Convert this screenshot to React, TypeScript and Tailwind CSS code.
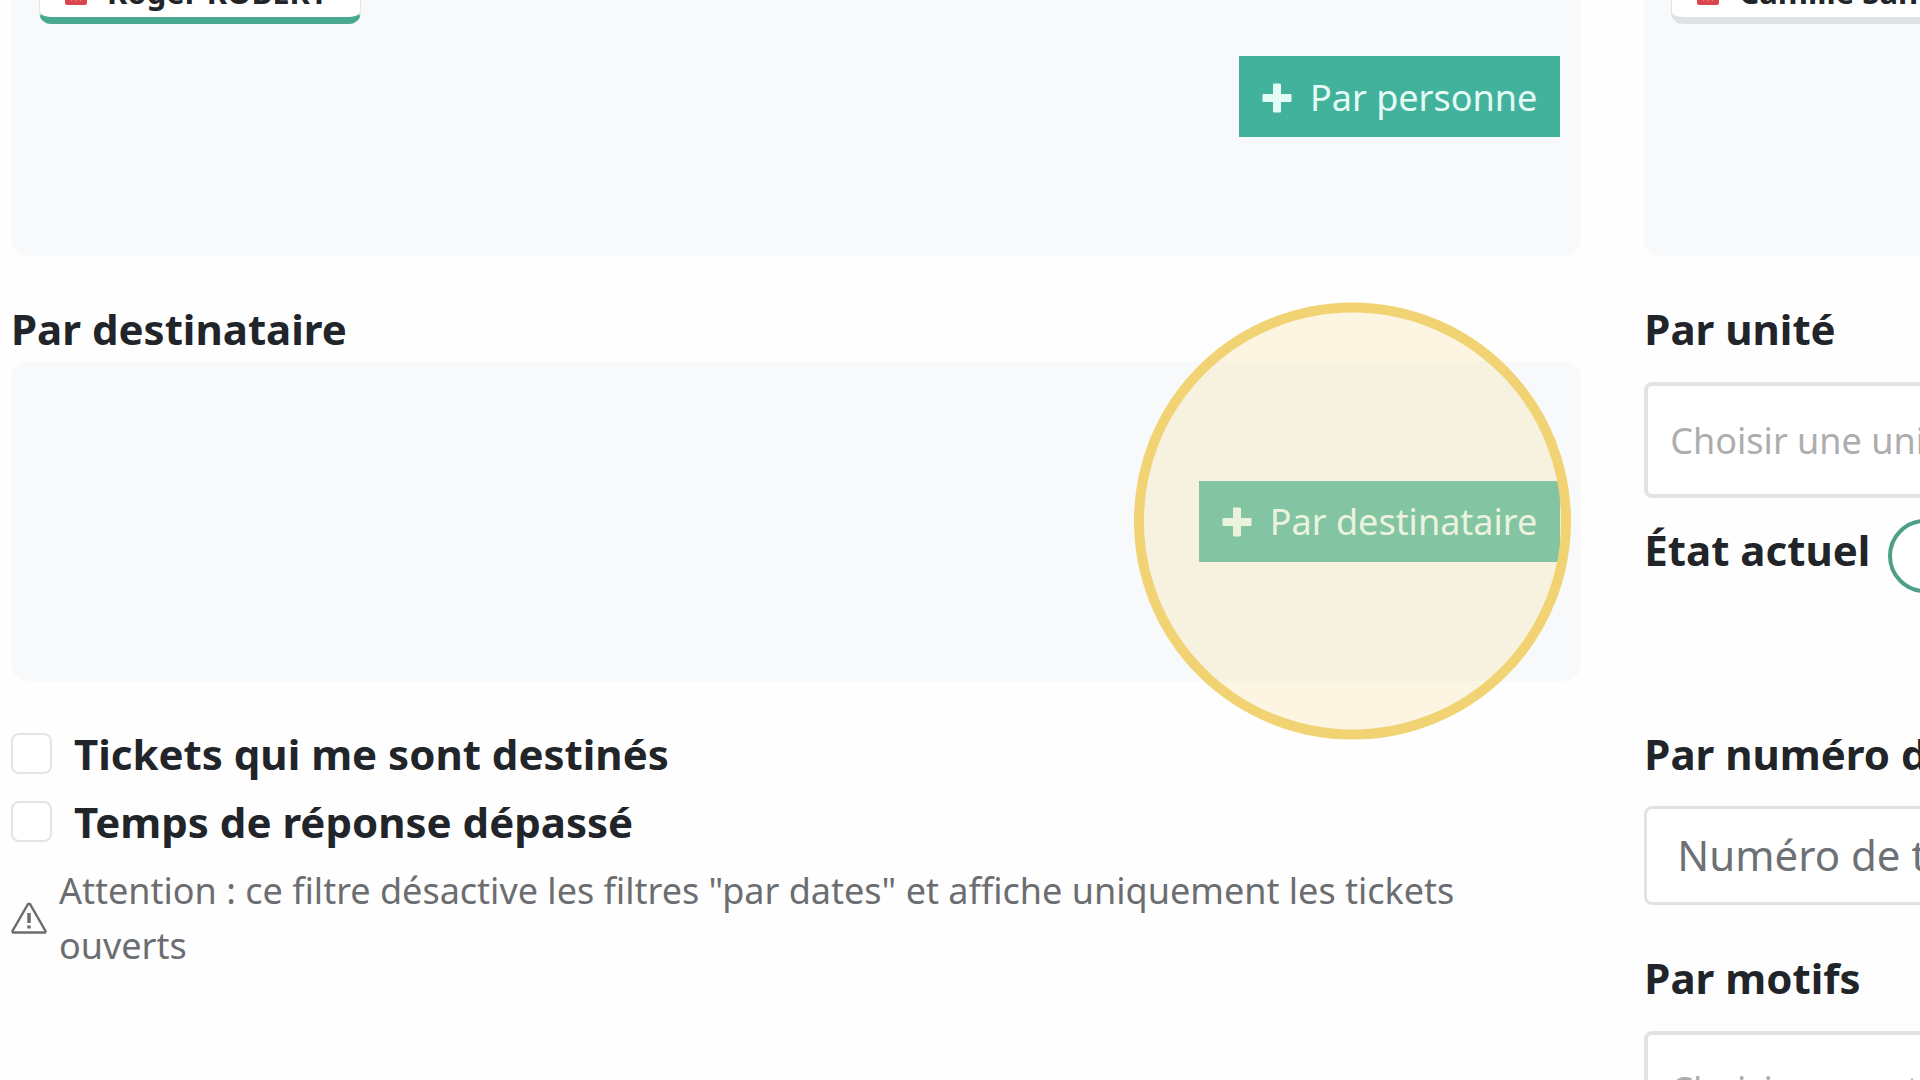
import React from "react";

function Plus() {
  return (
    <svg className="size-[30px] shrink-0" viewBox="0 0 30 30" fill="currentColor" aria-hidden="true">
      <path d="M11 1.5q0-1 1-1h6q1 0 1 1V11h9.500q1 0 1 1v6q0 1-1 1H19v9.500q0 1-1 1h-6q-1 0-1-1V19H1.500q-1 0-1-1v-6q0-1 1-1H11z" />
    </svg>
  );
}

function Trash() {
  return (
    <svg className="h-7 w-[22px] shrink-0 text-[#dc4450]" viewBox="0 0 22 26" aria-hidden="true">
      <path fill="currentColor" d="M7 0h8l1 2h6v3H0V2h6zM0 6h22v18q0 2-2 2H2q-2 0-2-2z" />
      <path stroke="#f6b3b8" strokeWidth="1.500" d="M6.500 10v11.500M11 10v11.500M15.500 10v11.500" />
    </svg>
  );
}

function Warning() {
  return (
    <svg className="h-8 w-9 shrink-0" viewBox="0 0 36 32" fill="none" stroke="currentColor" aria-hidden="true">
      <path strokeWidth="2.500" strokeLinejoin="round" d="M17 2h2l15.500 27-.5 1.500H2L1.500 29z" />
      <path strokeWidth="3.500" d="M18 11v10M18 23.500v3" />
    </svg>
  );
}

function AddButton({ label }: { label: string }) {
  return (
    <button className="flex h-[81px] items-center gap-[18px] bg-[#43b29d] px-[23px] pt-0.5 text-4xl text-[#e4fbf6]">
      <Plus />
      {label}
    </button>
  );
}

function Chip({ name, tone }: { name: string; tone: string }) {
  return (
    <div
      className={`flex h-[58px] w-fit items-center gap-5 whitespace-nowrap rounded-xl border-x border-t border-b-[7px] bg-white pl-[25px] pr-8 text-[31px] font-bold leading-10 ${tone}`}
    >
      <button aria-label={`Retirer ${name}`} className="flex">
        <Trash />
      </button>
      {name}
    </div>
  );
}

function Check({ label }: { label: string }) {
  return (
    <label className="flex h-[68px] w-fit items-center gap-[22px] text-[42px] font-bold">
      <input type="checkbox" className="size-[41px] appearance-none rounded-lg border-2 border-[#e2e4e7] bg-white" />
      {label}
    </label>
  );
}

const heading = "block text-[42px] font-bold leading-[62px]";
const picker =
  "mt-[22px] block h-[116px] w-full rounded-lg border-4 border-[#e3e3e3] bg-white px-[22px] text-4xl placeholder:text-[#adadad]";

export default function App() {
  return (
    <main className="h-screen overflow-hidden bg-[#fefefe] font-['Noto_Sans',sans-serif] text-[#212529]">
      <form className="grid w-[168%] grid-cols-2 gap-x-[63px] px-[11px]">
        <div>
          <section className="-mt-16 h-80 rounded-2xl bg-[#f8f9fb] px-[21px] pt-[30px]">
            <div className="pl-[7px]">
              <Chip name="Roger ROBERT" tone="border-[#e3e6e9] border-b-[#4aa891]" />
            </div>
            <div className="mt-8 flex justify-end">
              <AddButton label="Par personne" />
            </div>
          </section>

          <h2 className={`${heading} mt-[42px]`}>Par destinataire</h2>
          <section className="relative mt-px flex h-80 items-center justify-end rounded-2xl bg-[#f8f9fb] px-[21px]">
            <AddButton label="Par destinataire" />
            <div className="pointer-events-none absolute right-[10px] top-1/2 size-[437px] -translate-y-1/2 rounded-full border-10 border-[#f1d373] bg-[rgba(246,229,176,0.36)] bg-clip-padding" />
          </section>

          <div className="mt-[38px]">
            <Check label="Tickets qui me sont destinés" />
            <Check label="Temps de réponse dépassé" />
            <div className="mt-2 flex items-center gap-3 text-[#6b6d70]">
              <Warning />
              <p className="pr-20 text-4xl leading-[55px]">
                Attention : ce filtre désactive les filtres "par dates" et affiche uniquement les tickets ouverts
              </p>
            </div>
          </div>
        </div>

        <div>
          <section className="-mt-16 h-80 rounded-2xl bg-[#f8f9fb] px-[27px] pt-[30px]">
            <Chip name="Camille Sanchez" tone="border-[#dee2e6]" />
          </section>

          <label className={`${heading} mt-[42px]`} htmlFor="unite">
            Par unité
          </label>
          <input id="unite" className={picker} placeholder="Choisir une unité" />

          <div className="mt-[21px] flex items-start gap-[18px]">
            <label className={heading} htmlFor="etat">
              État actuel
            </label>
            <input
              id="etat"
              type="checkbox"
              role="switch"
              className="h-[74px] w-36 appearance-none rounded-full border-4 border-[#4f9f88] bg-white"
            />
          </div>

          <label className={`${heading} mt-[130px]`} htmlFor="numero">
            Par numéro de ticket
          </label>
          <input
            id="numero"
            className="mt-[21px] block h-[99px] w-full rounded-lg border-[3px] border-[#e0e2e4] bg-white px-[30px] pb-0.5 text-[42px] placeholder:text-[#6d7176]"
            placeholder="Numéro de ticket"
          />

          <label className={`${heading} mt-[42px]`} htmlFor="motifs">
            Par motifs
          </label>
          <input id="motifs" className={picker} placeholder="Choisir un motif" />
        </div>
      </form>
    </main>
  );
}
